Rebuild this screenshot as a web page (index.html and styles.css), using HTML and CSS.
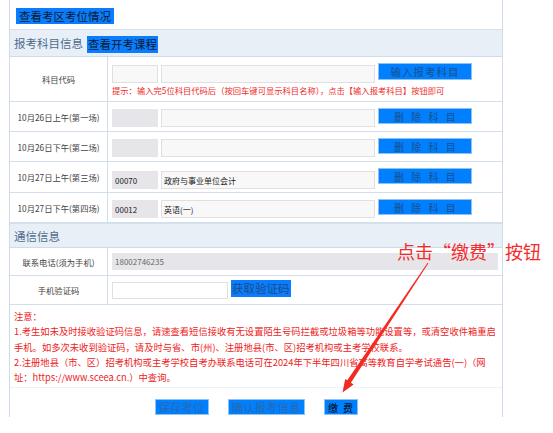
FILE: index.html
```html
<!DOCTYPE html>
<html lang="zh-CN">
<head>
<meta charset="utf-8">
<title>报考科目信息</title>
<link rel="stylesheet" href="styles.css">
</head>
<body>
<div class="box">
  <div class="toprow"><span class="hl">查看考区考位情况</span></div>

  <div class="band band-first"><span class="band-title">报考科目信息</span><span class="hl">查看开考课程</span></div>

  <div class="row row-code">
    <div class="label">科目代码</div>
    <div class="cell">
      <div class="fields">
        <input class="inp inp-code" type="text" value="">
        <input class="inp inp-name" type="text" value="">
        <span class="btn btn-wide">输入报考科目</span>
      </div>
      <div class="hint">提示：输入完5位科目代码后（按回车键可显示科目名称），点击【输入报考科目】按钮即可</div>
    </div>
  </div>

  <div class="row row-sub">
    <div class="label">10月26日上午(第一场)</div>
    <div class="cell fields">
      <input class="inp inp-code inp-gray" type="text" value="" readonly>
      <input class="inp inp-name" type="text" value="" readonly>
      <span class="btn btn-del">删除科目</span>
    </div>
  </div>
  <div class="row row-sub">
    <div class="label">10月26日下午(第二场)</div>
    <div class="cell fields">
      <input class="inp inp-code inp-gray" type="text" value="" readonly>
      <input class="inp inp-name" type="text" value="" readonly>
      <span class="btn btn-del">删除科目</span>
    </div>
  </div>
  <div class="row row-sub row-tall">
    <div class="label">10月27日上午(第三场)</div>
    <div class="cell fields">
      <input class="inp inp-code inp-gray" type="text" value="00070" readonly>
      <input class="inp inp-name" type="text" value="政府与事业单位会计" readonly>
      <span class="btn btn-del">删除科目</span>
    </div>
  </div>
  <div class="row row-sub">
    <div class="label">10月27日下午(第四场)</div>
    <div class="cell fields">
      <input class="inp inp-code inp-gray" type="text" value="00012" readonly>
      <input class="inp inp-name" type="text" value="英语(一)" readonly>
      <span class="btn btn-del">删除科目</span>
    </div>
  </div>

  <div class="band band-second"><span class="band-title">通信信息</span></div>

  <div class="row row-phone">
    <div class="label">联系电话(须为手机)</div>
    <div class="cell fields">
      <input class="inp inp-phone" type="text" value="18002746235" readonly>
    </div>
  </div>
  <div class="row row-verify">
    <div class="label">手机验证码</div>
    <div class="cell fields">
      <input class="inp inp-verify" type="text" value="">
      <span class="hl hl-code">获取验证码</span>
    </div>
  </div>

  <div class="notes">
    注意：<br>
    1.考生如未及时接收验证码信息，请速查看短信接收有无设置陌生号码拦截或垃圾箱等功能设置等，或清空收件箱重启<br>
    手机。如多次未收到验证码，请及时与省、市(州)、注册地县(市、区)招考机构或主考学校联系。<br>
    2.注册地县（市、区）招考机构或主考学校自考办联系电话可在2024年下半年四川省高等教育自学考试通告(一)（网<br>
    址：https://www.sceea.cn.）中查询。
  </div>

  <div class="actions">
    <span class="btn btn-act">保存考位</span>
    <span class="btn btn-act">确认报考信息</span>
    <span class="btn btn-pay">缴费</span>
  </div>
</div>

<div class="callout">点击“缴费”按钮</div>
<svg class="arrow" width="553" height="433" viewBox="0 0 553 433">
  <polygon points="428.4,263.3 427.6,262.7 346.8,381.0 350.6,383.2" fill="#f22a22"/>
  <polygon points="342.5,392.5 353.6,384.6 345.2,378.9" fill="#f22a22"/>
</svg>
</body>
</html>
```

FILE: styles.css
```css
* { box-sizing: border-box; }

html, body {
  margin: 0;
  padding: 0;
  background: #ffffff;
}

body {
  font-family: "Noto Sans CJK SC", "Noto Sans", sans-serif;
  color: #333;
  position: relative;
  width: 553px;
  height: 433px;
  overflow: hidden;
}

.box {
  margin-left: 9px;
  width: 494px;
  height: 417px;
  border-left: 1px solid #cfdbea;
  border-right: 1px solid #cfdbea;
  display: flex;
  flex-direction: column;
}

.toprow {
  height: 29px;
  padding: 8px 0 0 6px;
  display: flex;
  align-items: flex-start;
}

.hl {
  display: inline-block;
  background: #0a7dff;
  color: #0b1a2e;
  font-size: 11.5px;
  line-height: 16px;
  height: 16px;
  padding: 0 3px;
  white-space: nowrap;
}

.band {
  background: #e8eff7;
  border-top: 1px solid #d6e1ee;
  border-bottom: 1px solid #cfdbea;
  display: flex;
  align-items: center;
  padding-left: 4px;
  gap: 4px;
}

.band-first { height: 28px; }
.band-second { height: 25px; }

.band-title {
  font-size: 11.5px;
  color: #4f6d8c;
}

.band-first .hl {
  height: 17px;
  line-height: 17px;
  padding: 0 1px;
  margin-top: 2px;
}

.row {
  display: grid;
  grid-template-columns: 98px 1fr;
  border-bottom: 1px solid #d3deec;
}

.label {
  border-right: 1px solid #d3deec;
  display: flex;
  align-items: center;
  justify-content: center;
  font-size: 8.3px;
  color: #444;
  white-space: nowrap;
}

.cell { padding-left: 4px; }

.fields {
  display: flex;
  align-items: flex-start;
  gap: 3px;
}

.row-code { height: 45px; }
.row-code .cell { padding-top: 6px; }
.row-code .inp { margin-top: 2px; }

.row-sub { height: 30px; }
.row-tall { height: 31px; }
.row-sub .cell { padding-top: 6px; }
.row-sub .inp { margin-top: 1px; }
.row-tall .inp { margin-top: 3px; }

.row-phone { height: 28px; }
.row-phone .cell { padding-top: 4px; }

.row-verify { height: 29px; }
.row-verify .cell { padding-top: 4px; }
.row-verify .inp { margin-top: 2px; }

.inp {
  height: 18px;
  border: 1px solid #e0e0e0;
  background: #f8f8f8;
  font-family: "Noto Sans CJK SC", "Noto Sans", sans-serif;
  font-size: 8px;
  color: #222;
  padding: 0 2px;
  margin: 0;
  outline: none;
}

.inp-code { width: 46px; }
.inp-name { width: 214px; }
.inp-gray { background: #e6e6ea; border-color: #e6e6ea; }
.inp-phone {
  width: 386px;
  height: 17px;
  background: #e6e6ea;
  border-color: #e6e6ea;
  color: #666;
  margin-top: 1px;
}
.inp-verify { width: 116px; height: 17px; background: #fff; }

.hl-code {
  height: 17px;
  line-height: 17px;
  padding: 0 1px;
  color: #1a4c82;
}

.btn {
  display: inline-flex;
  align-items: center;
  justify-content: center;
  background: #0080ff;
  border: 1px solid #8fc1f2;
  height: 17px;
  white-space: nowrap;
}

.btn-wide {
  width: 94px;
  font-size: 10.5px;
  letter-spacing: 1px;
  color: #1b4f8a;
}

.btn-del {
  width: 94px;
  height: 16px;
  font-size: 10px;
  letter-spacing: 7.2px;
  padding-left: 7px;
  color: #1b4f8a;
}

.hint {
  margin-top: 2px;
  font-size: 8.3px;
  line-height: 11px;
  color: #ee2b2b;
  white-space: nowrap;
}

.notes {
  height: 83px;
  padding: 4px 0 0 4px;
  font-size: 9.3px;
  line-height: 15.3px;
  color: #ee2222;
  white-space: nowrap;
  border-bottom: 1px solid #edf1f8;
}

.actions {
  flex: 1;
  display: flex;
  justify-content: center;
  align-items: flex-start;
  gap: 19px;
  padding-top: 11px;
}

.btn-act {
  height: 16px;
  font-size: 11.5px;
  color: #2a68b0;
  padding: 0 3px;
}

.btn-pay {
  height: 16px;
  width: 34px;
  font-size: 10px;
  letter-spacing: 5px;
  padding-left: 5px;
  color: #000;
}

.callout {
  position: absolute;
  left: 397px;
  top: 240px;
  font-size: 18px;
  line-height: 22px;
  color: #f42b2b;
  white-space: nowrap;
}

.arrow {
  position: absolute;
  left: 0;
  top: 0;
  pointer-events: none;
}
```
